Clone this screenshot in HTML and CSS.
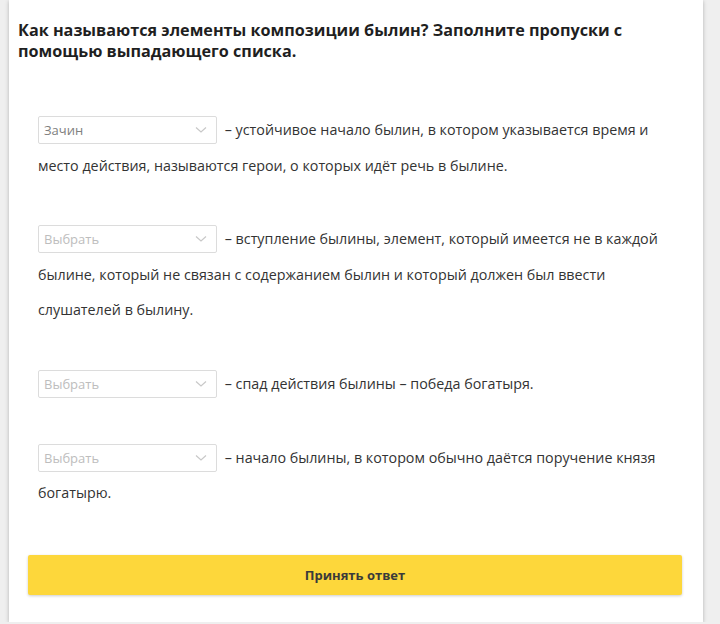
FILE: index.html
```html
<!DOCTYPE html>
<html lang="ru">
<head>
  <meta charset="UTF-8" />
  <meta name="viewport" content="width=device-width, initial-scale=1.0"/>
  <title>Элементы композиции былин</title>
  <link rel="stylesheet" href="styles.css">
</head>
<body>
  <div class="card">
    <h2 class="question">Как называются элементы композиции былин? Заполните пропуски с помощью выпадающего списка.</h2>

    <div class="answers">
      <div class="answer-row">
        <span class="dropdown filled"><span class="dropdown-label">Зачин</span><svg class="chevron" width="12" height="8" viewBox="0 0 12 8"><path d="M1 1.5 L6 6 L11 1.5" fill="none" stroke="#c8c8c8" stroke-width="1.2"/></svg></span>
        <span class="answer-text">– устойчивое начало былин, в котором указывается время и место действия, называются герои, о которых идёт речь в былине.</span>
      </div>

      <div class="answer-row">
        <span class="dropdown"><span class="dropdown-label">Выбрать</span><svg class="chevron" width="12" height="8" viewBox="0 0 12 8"><path d="M1 1.5 L6 6 L11 1.5" fill="none" stroke="#c8c8c8" stroke-width="1.2"/></svg></span>
        <span class="answer-text">– вступление былины, элемент, который имеется не в каждой былине, который не связан с содержанием былин и который должен был ввести слушателей в былину.</span>
      </div>

      <div class="answer-row">
        <span class="dropdown"><span class="dropdown-label">Выбрать</span><svg class="chevron" width="12" height="8" viewBox="0 0 12 8"><path d="M1 1.5 L6 6 L11 1.5" fill="none" stroke="#c8c8c8" stroke-width="1.2"/></svg></span>
        <span class="answer-text">– спад действия былины – победа богатыря.</span>
      </div>

      <div class="answer-row">
        <span class="dropdown"><span class="dropdown-label">Выбрать</span><svg class="chevron" width="12" height="8" viewBox="0 0 12 8"><path d="M1 1.5 L6 6 L11 1.5" fill="none" stroke="#c8c8c8" stroke-width="1.2"/></svg></span>
        <span class="answer-text">– начало былины, в котором обычно даётся поручение князя богатырю.</span>
      </div>
    </div>

    <button class="submit-btn">Принять ответ</button>
  </div>
</body>
</html>
```

FILE: styles.css
```css
* {
  box-sizing: border-box;
  padding: 0;
  margin: 0;
}

body {
  font-family: "Open Sans", Arial, sans-serif;
  background-color: #efefef;
  color: #333;
}

.card {
  width: 694px;
  margin-left: 9px;
  background-color: #fff;
  padding: 20px 21px 27px 19px;
  box-shadow: 0 1px 4px rgba(0,0,0,0.25);
}

.question {
  margin-left: -10px;
  font-size: 16.2px;
  line-height: 21px;
  font-weight: 700;
  color: #1f1f1f;
  padding-right: 30px;
}

.answers {
  margin-top: 50px;
  padding: 0 10px;
}

.answer-row {
  font-size: 14.3px;
  line-height: 35.6px;
  color: #333;
  margin-bottom: 38px;
}

.answer-row:last-child {
  margin-bottom: 0;
}

.dropdown {
  display: inline-flex;
  align-items: center;
  justify-content: space-between;
  width: 179px;
  height: 28px;
  padding: 0 9px 0 5px;
  margin-right: 4px;
  border: 1px solid #dcdcdc;
  border-radius: 2px;
  font-size: 13px;
  line-height: 18px;
  color: #bdbdbd;
  vertical-align: middle;
  position: relative;
  top: -1px;
}

.dropdown.filled {
  color: #808080;
}

.submit-btn {
  display: block;
  width: 100%;
  height: 40px;
  margin-top: 44.5px;
  border: none;
  border-radius: 2px;
  background-color: #fdd73b;
  box-shadow: 0 1px 3px rgba(0,0,0,0.2);
  font-family: "Open Sans", Arial, sans-serif;
  font-size: 13px;
  font-weight: 700;
  color: #3a3a3a;
  cursor: pointer;
}
```
